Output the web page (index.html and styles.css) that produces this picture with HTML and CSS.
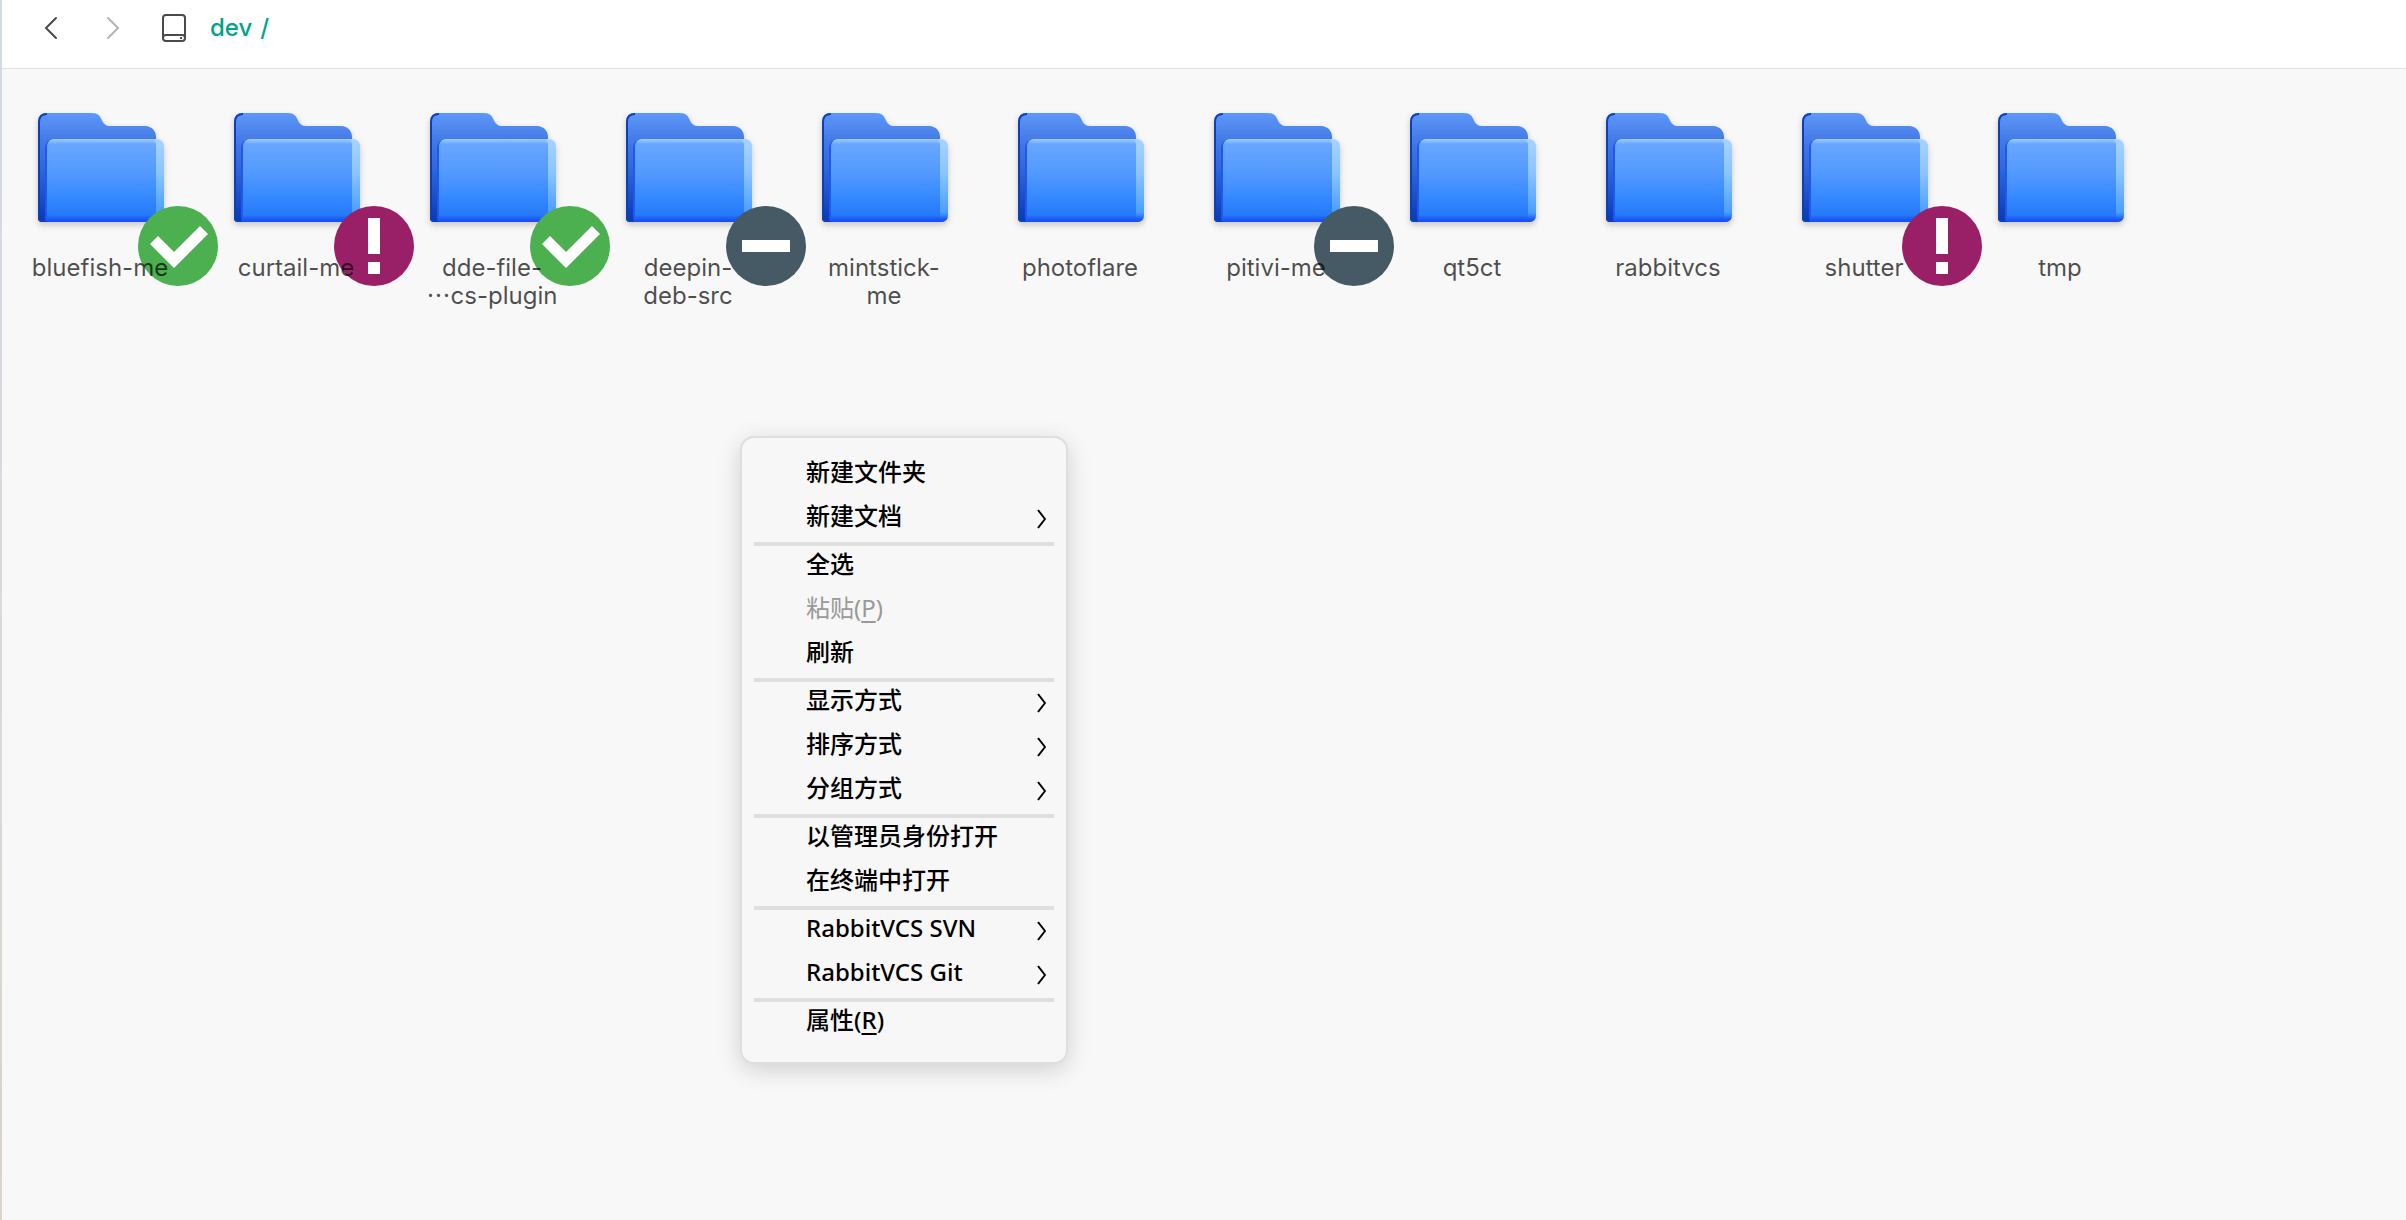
FILE: index.html
```html
<!DOCTYPE html>
<html lang="zh-CN">
<head>
    <meta charset="UTF-8">
    <meta name="viewport" content="width=device-width, initial-scale=1.0">
    <title>dev</title>
    <link rel="stylesheet" href="styles.css">
</head>
<body>
    <!-- shared icons -->
    <svg class="sprites" aria-hidden="true">
        <defs>
            <linearGradient id="back-fill" x1="0" y1="0" x2="0" y2="1">
                <stop offset="0" stop-color="#5e98fa"/>
                <stop offset="0.24" stop-color="#457be6"/>
                <stop offset="0.55" stop-color="#2c64d2"/>
                <stop offset="1" stop-color="#0839b2"/>
            </linearGradient>
            <linearGradient id="front-fill" x1="0" y1="0" x2="0" y2="1">
                <stop offset="0" stop-color="#6aa9ff"/>
                <stop offset="0.4" stop-color="#5499ff"/>
                <stop offset="0.72" stop-color="#3388ff"/>
                <stop offset="0.92" stop-color="#2679f8"/>
                <stop offset="1" stop-color="#1c5cf8"/>
            </linearGradient>
            <linearGradient id="side-fill" x1="0" y1="0" x2="0" y2="1">
                <stop offset="0" stop-color="#a6d3ff"/>
                <stop offset="0.4" stop-color="#8cc4ff"/>
                <stop offset="0.88" stop-color="#4a9eff"/>
                <stop offset="1" stop-color="#1c57f2"/>
            </linearGradient>
            <linearGradient id="top-shine" x1="0" y1="0" x2="0" y2="1">
                <stop offset="0" stop-color="#a4ceff"/>
                <stop offset="1" stop-color="#a4ceff" stop-opacity="0"/>
            </linearGradient>
            <linearGradient id="bottom-shade" x1="0" y1="0" x2="0" y2="1">
                <stop offset="0" stop-color="#1a50f8" stop-opacity="0"/>
                <stop offset="1" stop-color="#1a4df5"/>
            </linearGradient>
        </defs>
        <symbol id="folder" viewBox="0 0 126 109">
            <path fill="url(#back-fill)" d="M9 0H54C60 0 62.500 3.500 64 7.500C65.500 11 68 13 72 13H107C114 13 118 18 118 24V60H14V109H4Q0 109 0 105V9Q0 0 9 0Z"/>
            <path fill="none" stroke="#0a40bd" stroke-width="2" d="M9 1Q1 1 1 9V105Q1 108 4 108H8"/>
            <path fill="url(#side-fill)" d="M16 26H118Q126 26 126 34V102Q126 109 119 109H16Z"/>
            <path fill="#1f57f5" d="M16 26Q7 27 7 35V105Q7 109 11 109H16Z"/>
            <path fill="url(#front-fill)" d="M17 26H112Q118 26 118 32V103Q118 109 112 109H11Q9 108 9 105V34Q9 26 17 26Z"/>
            <path fill="url(#top-shine)" d="M17 26H118Q118 28 118 31H10Q11 26 17 26Z"/>
            <path fill="url(#bottom-shade)" d="M9 102H126Q126 109 119 109H11Q9 108 9 105Z"/>
        </symbol>
        <symbol id="chevron" viewBox="0 0 12 22">
            <path fill="none" stroke="currentColor" stroke-width="2" stroke-linejoin="round" d="M2 2L9 11L2 20"/>
        </symbol>
        <symbol id="badge-ok" viewBox="0 0 80 80">
            <circle cx="40" cy="40" r="40" fill="#4caf50"/>
            <path fill="#fff" d="M12 38L20 30L36 46L62 20L70 28L36 62Z"/>
        </symbol>
        <symbol id="badge-conflict" viewBox="0 0 80 80">
            <circle cx="40" cy="40" r="40" fill="#991f66"/>
            <path fill="#fff" d="M34 12H46V48H34ZM34 56H46V68H34Z"/>
        </symbol>
        <symbol id="badge-ignored" viewBox="0 0 80 80">
            <circle cx="40" cy="40" r="40" fill="#455a64"/>
            <path fill="#fff" d="M16 34H64V46H16Z"/>
        </symbol>
    </svg>

    <header class="toolbar">
        <button class="nav-btn" aria-label="后退">
            <svg viewBox="0 0 20 24"><path d="M14 2L4 12L14 22"/></svg>
        </button>
        <button class="nav-btn" aria-label="前进" disabled>
            <svg viewBox="0 0 20 24"><path d="M6 2L16 12L6 22"/></svg>
        </button>
        <nav class="path">
            <svg class="disk" viewBox="0 0 24 28">
                <rect x="1" y="1" width="22" height="26" rx="3"/>
                <path d="M1 24Q1 21 4 21H20Q23 21 23 24"/>
                <path class="led" d="M18 23H20V25H18Z"/>
            </svg>
            <a href="#">dev</a>
            <span>/</span>
        </nav>
    </header>

    <main>
        <ul class="files">
            <li class="file">
                <svg class="folder"><use href="#folder"/></svg>
                <svg class="badge"><use href="#badge-ok"/></svg>
                <span class="name">bluefish-me</span>
            </li>
            <li class="file">
                <svg class="folder"><use href="#folder"/></svg>
                <svg class="badge"><use href="#badge-conflict"/></svg>
                <span class="name">curtail-me</span>
            </li>
            <li class="file">
                <svg class="folder"><use href="#folder"/></svg>
                <svg class="badge"><use href="#badge-ok"/></svg>
                <span class="name">dde-file-<br>⋯cs-plugin</span>
            </li>
            <li class="file">
                <svg class="folder"><use href="#folder"/></svg>
                <svg class="badge"><use href="#badge-ignored"/></svg>
                <span class="name">deepin-<br>deb-src</span>
            </li>
            <li class="file">
                <svg class="folder"><use href="#folder"/></svg>
                <span class="name">mintstick-<br>me</span>
            </li>
            <li class="file">
                <svg class="folder"><use href="#folder"/></svg>
                <span class="name">photoflare</span>
            </li>
            <li class="file">
                <svg class="folder"><use href="#folder"/></svg>
                <svg class="badge"><use href="#badge-ignored"/></svg>
                <span class="name">pitivi-me</span>
            </li>
            <li class="file">
                <svg class="folder"><use href="#folder"/></svg>
                <span class="name">qt5ct</span>
            </li>
            <li class="file">
                <svg class="folder"><use href="#folder"/></svg>
                <span class="name">rabbitvcs</span>
            </li>
            <li class="file">
                <svg class="folder"><use href="#folder"/></svg>
                <svg class="badge"><use href="#badge-conflict"/></svg>
                <span class="name">shutter</span>
            </li>
            <li class="file">
                <svg class="folder"><use href="#folder"/></svg>
                <span class="name">tmp</span>
            </li>
        </ul>
    </main>

    <div class="menu" role="menu">
        <button role="menuitem">新建文件夹</button>
        <button role="menuitem">新建文档<svg><use href="#chevron"/></svg></button>
        <hr>
        <button role="menuitem">全选</button>
        <button role="menuitem" disabled><span>粘贴(<u>P</u>)</span></button>
        <button role="menuitem">刷新</button>
        <hr>
        <button role="menuitem">显示方式<svg><use href="#chevron"/></svg></button>
        <button role="menuitem">排序方式<svg><use href="#chevron"/></svg></button>
        <button role="menuitem">分组方式<svg><use href="#chevron"/></svg></button>
        <hr>
        <button role="menuitem">以管理员身份打开</button>
        <button role="menuitem">在终端中打开</button>
        <hr>
        <button role="menuitem">RabbitVCS SVN<svg><use href="#chevron"/></svg></button>
        <button role="menuitem">RabbitVCS Git<svg><use href="#chevron"/></svg></button>
        <hr>
        <button role="menuitem"><span>属性(<u>R</u>)</span></button>
    </div>
</body>
</html>
```

FILE: styles.css
```css
* {
    box-sizing: border-box;
}

body {
    margin: 0;
    min-height: 100vh;
    padding-left: 2px;
    background: linear-gradient(#d3dae8, #d8dadb 50%, #dbd4c8) left / 2px 100% no-repeat #f8f8f8;
    font-family: Inter, "Noto Sans CJK SC", sans-serif;
    font-size: 24px;
    color: #4a4a4a;
}

button {
    border: none;
    background: none;
    padding: 0;
    font: inherit;
    color: inherit;
}

.sprites {
    position: absolute;
    width: 0;
    height: 0;
}

/* toolbar */
.toolbar {
    display: flex;
    align-items: center;
    height: 69px;
    padding: 0 40px 12px;
    background: #fff;
    border-bottom: 1px solid #e0e0e0;
}

.nav-btn {
    display: flex;
    width: 60px;
}

.nav-btn svg {
    width: 20px;
    height: 24px;
    fill: none;
    stroke: #4a4a4a;
    stroke-width: 2;
    stroke-linecap: round;
}

.nav-btn:disabled svg {
    stroke: #b4b4b4;
}

.path {
    display: flex;
    align-items: center;
    line-height: 28px;
    font-weight: 500;
    color: #00a48a;
}

.path a {
    margin: 0 8px 0 24px;
    color: inherit;
    text-decoration: none;
}

.disk {
    width: 24px;
    height: 28px;
    fill: none;
    stroke: #4a4a4a;
    stroke-width: 2;
}

.disk .led {
    fill: #4a4a4a;
    stroke: none;
}

/* files */
.files {
    display: flex;
    flex-wrap: wrap;
    gap: 56px;
    margin: 0;
    padding: 44px 28px;
    list-style: none;
}

.file {
    position: relative;
    display: flex;
    flex-direction: column;
    align-items: center;
    gap: 32px;
    width: 140px;
}

.folder {
    width: 126px;
    height: 109px;
    margin-left: 2px;
    filter: drop-shadow(0 3px 3px rgba(0, 0, 0, 0.2));
}

.badge {
    position: absolute;
    top: 93px;
    left: 108px;
    width: 80px;
    height: 80px;
}

.name {
    position: relative;
    line-height: 28px;
    text-align: center;
    white-space: nowrap;
    color: rgba(0, 0, 0, 0.7);
}

/* context menu */
.menu {
    position: absolute;
    top: 436px;
    left: 740px;
    width: 328px;
    padding: 16px 12px;
    border: 2px solid #dedede;
    border-radius: 14px;
    background: #f7f7f7;
    box-shadow: 0 6px 24px rgba(0, 0, 0, 0.16);
    font-family: "Noto Sans", "Noto Sans CJK SC", sans-serif;
    font-weight: 500;
    color: #000;
}

.menu button {
    display: flex;
    align-items: flex-start;
    justify-content: space-between;
    width: 100%;
    height: 44px;
    padding: 0 6px 0 52px;
    line-height: 36px;
    text-align: left;
}

.menu button:disabled {
    font-weight: 400;
    color: #999;
}

.menu hr {
    height: 4px;
    margin: 0;
    border: none;
    background: #dfdfdf;
}

.menu svg {
    width: 12px;
    height: 22px;
    margin-top: 10px;
}

.menu u {
    text-underline-offset: 4px;
    text-decoration-thickness: 2px;
}
```
